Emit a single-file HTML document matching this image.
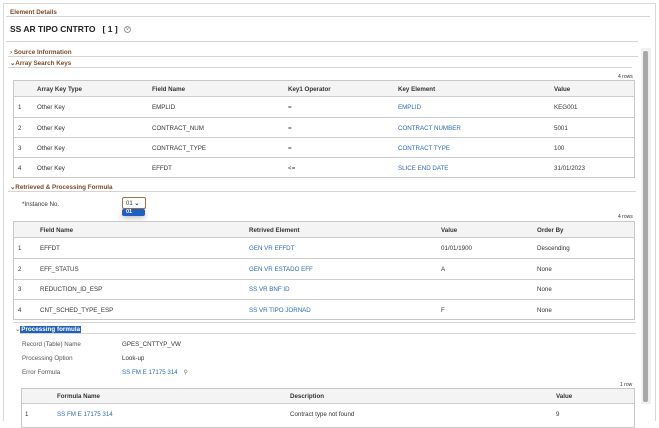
<!DOCTYPE html>
<html><head><style>
*{margin:0;padding:0;box-sizing:border-box}
body{width:659px;height:422px;overflow:hidden;background:#fff;font-family:"Liberation Sans",sans-serif;font-size:6.2px;color:#333;position:relative}
.a{position:absolute;white-space:nowrap;margin-top:1px}
.hl{position:absolute;height:1px;background:#d4d4d4}
.sec{color:#7a4a2a;font-weight:bold;font-size:6.3px}
.tb{position:absolute;border:1px solid #c8c8c8;background:#fff}
.th{position:absolute;left:0;right:0;top:0;background:#f4f4f4;border-bottom:1px solid #ccc}
.rl{position:absolute;left:0;right:0;height:1px;background:#ccc}
b{font-weight:bold;color:#333}
.lk{color:#2a6ab5}
</style></head><body>
<div style="position:absolute;left:3px;top:3px;width:653px;height:418px;border:1px solid #d8d8d8;border-bottom:none"></div>
<div class="a sec" style="left:10px;top:8px;font-weight:bold">Element Details</div>
<div class="hl" style="left:6px;top:16px;width:644px"></div>
<div class="a" style="left:10px;top:23px;font-size:8.5px;font-weight:bold;color:#222">SS AR TIPO CNTRTO &nbsp; [ 1 ] <span style="display:inline-block;width:7px;height:7px;border:1px solid #999;border-radius:50%;font-size:5px;line-height:5px;text-align:center;color:#999;vertical-align:middle;margin-left:4px">v</span></div>
<div class="hl" style="left:6px;top:41px;width:632px"></div>
<div style="position:absolute;left:641px;top:48px;width:10px;height:356px;background:#f0f0f0"></div>
<div style="position:absolute;left:643px;top:51px;width:5px;height:351px;background:#a8a8a8;border-radius:2px"></div>

<div class="a sec" style="left:10px;top:48px">› Source Information</div>
<div class="hl" style="left:8px;top:56px;width:630px"></div>
<div class="a sec" style="left:10px;top:59px">⌄Array Search Keys</div>
<div class="hl" style="left:8px;top:67px;width:624px"></div>
<div class="a" style="left:618px;top:73px;font-size:5px">4 rows</div>
<div class="tb" style="left:13px;top:80px;width:622px;height:98px">
<div class="th" style="height:16px"></div>
<div class="rl" style="top:36px"></div><div class="rl" style="top:56px"></div><div class="rl" style="top:76px"></div>
</div>
<div class="a" style="left:37px;top:85px"><b>Array Key Type</b></div>
<div class="a" style="left:152px;top:85px"><b>Field Name</b></div>
<div class="a" style="left:288px;top:85px"><b>Key1 Operator</b></div>
<div class="a" style="left:398px;top:85px"><b>Key Element</b></div>
<div class="a" style="left:554px;top:85px"><b>Value</b></div>
<div class="a" style="left:18px;top:103px">1</div><div class="a" style="left:37px;top:103px">Other Key</div><div class="a" style="left:152px;top:103px">EMPLID</div><div class="a" style="left:288px;top:103px">=</div><div class="a lk" style="left:398px;top:103px">EMPLID</div><div class="a" style="left:554px;top:103px">KEG001</div>
<div class="a" style="left:18px;top:124px">2</div><div class="a" style="left:37px;top:124px">Other Key</div><div class="a" style="left:152px;top:124px">CONTRACT_NUM</div><div class="a" style="left:288px;top:124px">=</div><div class="a lk" style="left:398px;top:124px">CONTRACT NUMBER</div><div class="a" style="left:554px;top:124px">5001</div>
<div class="a" style="left:18px;top:144px">3</div><div class="a" style="left:37px;top:144px">Other Key</div><div class="a" style="left:152px;top:144px">CONTRACT_TYPE</div><div class="a" style="left:288px;top:144px">=</div><div class="a lk" style="left:398px;top:144px">CONTRACT TYPE</div><div class="a" style="left:554px;top:144px">100</div>
<div class="a" style="left:18px;top:164px">4</div><div class="a" style="left:37px;top:164px">Other Key</div><div class="a" style="left:152px;top:164px">EFFDT</div><div class="a" style="left:288px;top:164px">&lt;=</div><div class="a lk" style="left:398px;top:164px">SLICE END DATE</div><div class="a" style="left:554px;top:164px">31/01/2023</div>

<div class="a sec" style="left:10px;top:183px">⌄Retrieved &amp; Processing Formula</div>
<div class="hl" style="left:8px;top:191px;width:628px"></div>
<div class="a" style="left:22px;top:200px">*Instance No.</div>
<div style="position:absolute;left:122px;top:197px;width:24px;height:12px;border:1px solid #a0704a;border-radius:2px;font-size:6px;padding:2px 0 0 3px">01 <b style="font-size:6px">⌄</b></div>
<div style="position:absolute;left:122px;top:209px;width:23px;height:7px;background:#1f5fbf;border-radius:2px;color:#fff;font-weight:bold;font-size:5.5px;padding-left:4px;line-height:7px;box-shadow:0 2px 6px rgba(0,0,0,.25)">01</div>
<div class="a" style="left:618px;top:213px;font-size:5px">4 rows</div>
<div class="tb" style="left:13px;top:221px;width:622px;height:99px">
<div class="th" style="height:16px"></div>
<div class="rl" style="top:36px"></div><div class="rl" style="top:57px"></div><div class="rl" style="top:77px"></div>
</div>
<div class="a" style="left:40px;top:226px"><b>Field Name</b></div>
<div class="a" style="left:249px;top:226px"><b>Retrived Element</b></div>
<div class="a" style="left:441px;top:226px"><b>Value</b></div>
<div class="a" style="left:537px;top:226px"><b>Order By</b></div>
<div class="a" style="left:18px;top:244px">1</div><div class="a" style="left:40px;top:244px">EFFDT</div><div class="a lk" style="left:249px;top:244px">GEN VR EFFDT</div><div class="a" style="left:441px;top:244px">01/01/1900</div><div class="a" style="left:537px;top:244px">Descending</div>
<div class="a" style="left:18px;top:265px">2</div><div class="a" style="left:40px;top:265px">EFF_STATUS</div><div class="a lk" style="left:249px;top:265px">GEN VR ESTADO EFF</div><div class="a" style="left:441px;top:265px">A</div><div class="a" style="left:537px;top:265px">None</div>
<div class="a" style="left:18px;top:285px">3</div><div class="a" style="left:40px;top:285px">REDUCTION_ID_ESP</div><div class="a lk" style="left:249px;top:285px">SS VR BNF ID</div><div class="a" style="left:537px;top:285px">None</div>
<div class="a" style="left:18px;top:306px">4</div><div class="a" style="left:40px;top:306px">CNT_SCHED_TYPE_ESP</div><div class="a lk" style="left:249px;top:306px">SS VR TIPO JORNAD</div><div class="a" style="left:441px;top:306px">F</div><div class="a" style="left:537px;top:306px">None</div>

<div class="hl" style="left:13px;top:322px;width:623px"></div>
<div class="a" style="left:15px;top:325px;font-size:6.3px;color:#7a4a2a">⌄<span style="background:#1f5fbf;color:#fff;font-weight:bold;padding:0 1px">Processing formula</span></div>
<div class="hl" style="left:20px;top:333px;width:616px"></div>
<div class="a" style="left:22px;top:340px;color:#555">Record (Table) Name</div><div class="a" style="left:122px;top:340px">GPES_CNTTYP_VW</div>
<div class="a" style="left:22px;top:354px;color:#555">Processing Option</div><div class="a" style="left:122px;top:354px">Look-up</div>
<div class="a" style="left:22px;top:368px;color:#555">Error Formula</div><div class="a lk" style="left:122px;top:368px">SS FM E 17175 314 <span style="color:#777;margin-left:4px">⚲</span></div>
<div class="a" style="left:620px;top:381px;font-size:5px">1 row</div>
<div class="tb" style="left:21px;top:388px;width:614px;height:40px">
<div class="th" style="height:15px"></div>
</div>
<div class="a" style="left:57px;top:392px"><b>Formula Name</b></div>
<div class="a" style="left:290px;top:392px"><b>Description</b></div>
<div class="a" style="left:556px;top:392px"><b>Value</b></div>
<div class="a" style="left:25px;top:410px">1</div><div class="a lk" style="left:57px;top:410px">SS FM E 17175 314</div><div class="a" style="left:290px;top:410px">Contract type not found</div><div class="a" style="left:556px;top:410px">9</div>
</body></html>
